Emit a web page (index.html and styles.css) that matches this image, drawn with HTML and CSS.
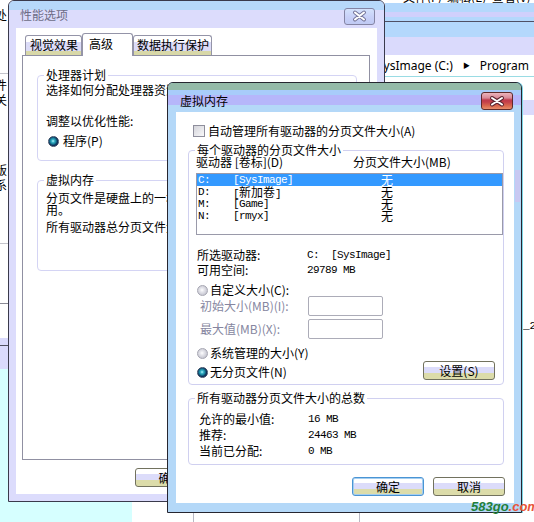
FILE: index.html
```html
<!DOCTYPE html>
<html lang="zh-CN">
<head>
    <meta charset="UTF-8">
    <meta name="viewport" content="width=device-width, initial-scale=1.0">
    <title>虚拟内存</title>
    <link rel="stylesheet" href="styles.css">
</head>
<body>

    <!-- windows left behind on the desktop -->
    <div class="side">
        <div class="frag f-chu">处</div>
        <div class="rule r1"></div>
        <div class="frag f-jian">件</div>
        <div class="frag f-guan">关</div>
        <div class="frag f-ban">版</div>
        <div class="frag f-xi">系</div>
        <div class="rule r2"></div>
        <div class="rule r3"></div>
        <div class="side-band"></div>
        <div class="side-cyan"></div>
    </div>

    <div class="under">
        <div class="under-gap g1"></div>
        <div class="under-line"></div>
        <div class="under-gap g2"></div>
        <div class="under-line"></div>
    </div>

    <div class="explorer">
        <div class="ex-menu"><span>文件(F)&nbsp;&nbsp;编辑(E)&nbsp;&nbsp;查看(V)&nbsp;&nbsp;工具(T)</span></div>
        <div class="ex-title"></div>
        <div class="ex-line"></div>
        <div class="ex-bar"></div>
        <div class="ex-address">
            <span class="crumb first">SysImage (C:)</span>
            <span class="crumb-arrow">&#9654;</span>
            <span class="crumb">Program</span>
        </div>
        <div class="ex-gap"></div>
        <div class="ex-band"></div>
        <div class="ex-rest">_2</div>
    </div>

    <!-- 性能选项 (inactive) -->
    <div class="perf">
        <div class="perf-title">性能选项</div>
        <div class="close inactive">
            <svg width="29" height="15" viewBox="0 0 29 15">
                <path d="M10 3.5 L19 10.5 M19 3.5 L10 10.5" stroke="#76769a" stroke-width="4" stroke-linecap="round"/>
                <path d="M10 3.5 L19 10.5 M19 3.5 L10 10.5" stroke="#fff" stroke-width="2" stroke-linecap="round"/>
            </svg>
        </div>
        <div class="perf-client">
            <div class="tabs">
                <div class="tab t1">视觉效果</div>
                <div class="tab t2 active">高级</div>
                <div class="tab t3">数据执行保护</div>
            </div>
            <div class="tab-panel">
                <div class="pgroup pg1">
                    <span class="legend">处理器计划</span>
                    <div class="line">选择如何分配处理器资源。</div>
                    <div class="line l-adjust">调整以优化性能:</div>
                    <div class="opt perf-opt"><span class="radio on"></span>程序(P)</div>
                </div>
                <div class="pgroup pg2">
                    <span class="legend">虚拟内存</span>
                    <div class="line">分页文件是硬盘上的一块区域，Windows 当作 RAM 使</div>
                    <div class="line">用。</div>
                    <div class="line l-total">所有驱动器总分页文件大小: &nbsp; 0 MB</div>
                </div>
            </div>
            <div class="perf-buttons">
                <div class="btn">确定</div>
                <div class="btn">取消</div>
                <div class="btn">应用(A)</div>
            </div>
        </div>
    </div>

    <!-- 虚拟内存 (active) -->
    <div class="vm">
        <div class="vm-title">虚拟内存</div>
        <div class="close active">
            <svg width="30" height="16" viewBox="0 0 30 16">
                <path d="M10 5 L20 11.5 M20 5 L10 11.5" stroke="#5a2430" stroke-width="4" stroke-linecap="round"/>
                <path d="M10 5 L20 11.5 M20 5 L10 11.5" stroke="#fff" stroke-width="2" stroke-linecap="round"/>
            </svg>
        </div>
        <div class="glass"></div>
        <div class="vm-client">
            <div class="check-row"><span class="checkbox"></span>自动管理所有驱动器的分页文件大小(A)</div>

            <div class="group g-files">
                <span class="legend">每个驱动器的分页文件大小</span>
                <div class="cols">
                    <span class="col-drive">驱动器 [卷标](D)</span>
                    <span>分页文件大小(MB)</span>
                </div>
                <div class="listbox">
                    <div class="item sel mono"><span class="c-letter">C:</span><span class="c-label">[SysImage]</span><span class="c-size cjk">无</span></div>
                    <div class="item mono"><span class="c-letter">D:</span><span class="c-label">[<span class="cjk">新加卷</span>]</span><span class="c-size cjk">无</span></div>
                    <div class="item mono"><span class="c-letter">M:</span><span class="c-label">[Game]</span><span class="c-size cjk">无</span></div>
                    <div class="item mono"><span class="c-letter">N:</span><span class="c-label">[rmyx]</span><span class="c-size cjk">无</span></div>
                </div>
                <div class="info-row"><span class="info-label">所选驱动器:</span><span class="mono">C:  [SysImage]</span></div>
                <div class="info-row tight"><span class="info-label">可用空间:</span><span class="mono">29789 MB</span></div>
                <div class="opt"><span class="radio"></span>自定义大小(C):</div>
                <div class="field"><span class="field-label">初始大小(MB)(I):</span><span class="input"></span></div>
                <div class="field second"><span class="field-label">最大值(MB)(X):</span><span class="input"></span></div>
                <div class="opt spaced"><span class="radio"></span>系统管理的大小(Y)</div>
                <div class="opt-last">
                    <div class="opt-inline"><span class="radio on"></span>无分页文件(N)</div>
                    <div class="btn set-btn">设置(S)</div>
                </div>
            </div>

            <div class="group g-total">
                <span class="legend">所有驱动器分页文件大小的总数</span>
                <div class="tot-row"><span class="tot-label">允许的最小值:</span><span class="mono">16 MB</span></div>
                <div class="tot-row"><span class="tot-label">推荐:</span><span class="mono">24463 MB</span></div>
                <div class="tot-row"><span class="tot-label">当前已分配:</span><span class="mono">0 MB</span></div>
            </div>

            <div class="vm-buttons">
                <div class="btn default">确定</div>
                <div class="btn">取消</div>
            </div>
        </div>
    </div>

    <div class="watermark"><span class="wm-green">583go</span><span class="wm-red">.com</span></div>

</body>
</html>
```

FILE: styles.css
```css
body {
    margin: 0;
    width: 534px;
    height: 522px;
    overflow: hidden;
    position: relative;
    background: #fff;
    font-family: "Noto Sans CJK SC", sans-serif;
    font-size: 12px;
    line-height: 12px;
    color: #000;
}

/* desktop leftovers */
.side {
    position: absolute;
    left: 0;
    top: 0;
    width: 132px;
    height: 522px;
    display: flex;
    flex-direction: column;
    overflow: hidden;
}
.frag {
    height: 12px;
    margin-left: -5px;
    white-space: nowrap;
}
.f-chu { margin-top: 9px; }
.f-jian { margin-top: 5px; }
.f-guan { margin-top: 3px; }
.f-ban { margin-top: 58px; }
.f-xi { margin-top: 3px; }
.rule { height: 1px; background: #c4c4cc; }
.r1 { margin-top: 52px; }
.r2 { margin-top: 52px; }
.r3 { margin-top: 59px; background: #8a8a96; }
.side-band {
    margin-top: 34px;
    height: 31px;
    background: linear-gradient(#dadafc 0 7px, #505060 7px 8px, #dadafc 8px);
}
.side-cyan { flex: 1; background: #d6ffff; }

.under {
    position: absolute;
    left: 132px;
    top: 501px;
    height: 21px;
    display: flex;
}
.under-gap.g1 { width: 61px; }
.under-gap.g2 { width: 165px; }
.under-line { width: 1px; background: #b8b8c4; }

.explorer {
    position: absolute;
    left: 385px;
    top: 0;
    width: 149px;
    height: 522px;
    display: flex;
    flex-direction: column;
    overflow: hidden;
}
.ex-menu { height: 3px; overflow: hidden; white-space: nowrap; }
.ex-menu span { display: block; margin-top: -9px; padding-left: 18px; }
.ex-title {
    height: 18px;
    background: linear-gradient(#b4d8fc 0 9px, #d0d0fc 9px 14px, #b4d8fc 14px);
}
.ex-line { height: 1px; background: #505064; }
.ex-bar {
    height: 33px;
    background: linear-gradient(#b4d8fc 0 15px, #dadafc 15px);
}
.ex-address {
    height: 21px;
    line-height: 21px;
    border-bottom: 1px solid #9adce4;
    white-space: nowrap;
    font-family: "Noto Sans", sans-serif;
    font-size: 12px;
    display: flex;
    gap: 10px;
}
.crumb.first { margin-left: -8px; }
.crumb-arrow { font-size: 7px; }
.ex-gap { height: 23px; }
.ex-band { height: 15px; background: #dadafc; }
.ex-rest {
    padding: 205px 0 0 138px;
    font-family: "Liberation Mono", monospace;
    font-size: 11px;
}

/* 性能选项 */
.perf {
    position: absolute;
    left: 8px;
    top: 0;
    width: 377px;
    height: 502px;
    box-sizing: border-box;
    border: 1px solid #3a3a4c;
    border-radius: 6px 6px 0 0;
    background: #dcdcfc;
    padding: 0 7px 7px 7px;
    overflow: hidden;
}
.perf-title {
    height: 27px;
    box-sizing: border-box;
    margin: 0 -7px;
    padding: 8px 0 0 11px;
    color: #6c6c86;
    background: linear-gradient(#b6d8fa 0 9px, #dcdcfc 9px);
}
.close {
    position: absolute;
    box-sizing: border-box;
    border-radius: 3px;
}
.close svg { display: block; }
.close.inactive {
    left: 335px;
    top: 7px;
    width: 31px;
    height: 17px;
    border: 1px solid #8484a4;
    background: linear-gradient(#d4e2fc, #c8d0f8 55%, #c0caf4);
}
.perf-client {
    height: 466px;
    box-sizing: border-box;
    background: #fff;
    padding-top: 5px;
    overflow: hidden;
}
.tabs {
    display: flex;
    align-items: flex-end;
    height: 22px;
    margin-left: 9px;
}
.tab {
    box-sizing: border-box;
    height: 20px;
    border: 1px solid #9494a8;
    border-bottom: 0;
    border-radius: 3px 3px 0 0;
    line-height: 18px;
    white-space: nowrap;
    background: linear-gradient(#fff 0 6px, #dcdcf8 6px 15px, #d8d8a8 15px);
}
.tab.t1 { width: 57px; padding-left: 4px; }
.tab.t2 { width: 51px; padding-left: 6px; }
.tab.t3 { width: 79px; padding-left: 3px; }
.tab.active {
    height: 23px;
    margin-bottom: -1px;
    line-height: 20px;
    background: #fff;
    position: relative;
    z-index: 1;
}
.tab-panel {
    margin-left: 6px;
    width: 348px;
    height: 405px;
    box-sizing: border-box;
    border: 1px solid #9090a2;
}
.pgroup {
    position: relative;
    box-sizing: border-box;
    width: 320px;
    margin: 19px 0 0 14px;
    border: 1px solid #d4d4f4;
    border-radius: 4px;
    padding: 8px 8px 13px 8px;
}
.pg2 { height: 91px; padding-top: 11px; }
.line { height: 12px; white-space: nowrap; }
.l-adjust { margin-top: 19px; }
.l-total { margin-top: 5px; }
.perf-opt { margin-top: 10px; }
.perf-opt .radio { margin-left: 1px; margin-right: 4px; }
.perf-buttons {
    display: flex;
    justify-content: flex-end;
    gap: 10px;
    margin: 8px 9px 0 0;
}
.perf-buttons .btn { width: 71px; }

.legend {
    position: absolute;
    top: -7px;
    left: 6px;
    padding: 0 2px;
    background: #fff;
    white-space: nowrap;
}

/* 虚拟内存 */
.vm {
    position: absolute;
    left: 167px;
    top: 82px;
    width: 355px;
    height: 431px;
    box-sizing: border-box;
    border: 1px solid #262630;
    border-radius: 6px 6px 0 0;
    background: #b4d8f8;
    padding: 0 7px 9px 8px;
    overflow: hidden;
    box-shadow: 1px 0 0 #7cd6e6;
}
.vm-title {
    height: 29px;
    box-sizing: border-box;
    margin: 0 -7px 0 -8px;
    padding: 12px 0 0 12px;
    background: linear-gradient(#94baa8 0 7px, #a8ccfa 7px 12px, #b6b6fa 12px 22px, #b4d8f8 22px);
}
.close.active {
    left: 313px;
    top: 9px;
    width: 32px;
    height: 18px;
    border: 1px solid #5e2a2a;
    background: linear-gradient(#ecb4bc 0, #d88896 5px, #c03a4a 7px, #c4404a 9px, #da6a4e 13px, #e88c6c 16px);
}
.glass {
    position: absolute;
    left: 347px;
    top: 87px;
    width: 5px;
    height: 32px;
    background: #c8c8f2;
}
.vm-client {
    height: 391px;
    box-sizing: border-box;
    background: #fff;
    padding: 13px 10px 0 12px;
}
.check-row {
    display: flex;
    align-items: center;
    height: 12px;
    margin-left: 5px;
}
.checkbox {
    width: 12px;
    height: 12px;
    box-sizing: border-box;
    margin-right: 3px;
    border: 1px solid #8e8e9c;
    background: linear-gradient(135deg, #d4d4da, #f8f8fa);
}
.group {
    position: relative;
    border: 1px solid #d0d0f0;
    border-radius: 4px;
}
.g-files { margin-top: 13px; padding: 5px 0 4px 7px; }
.cols { display: flex; height: 12px; white-space: nowrap; }
.col-drive { width: 157px; }
.listbox {
    margin-top: 5px;
    height: 62px;
    box-sizing: border-box;
    border: 1px solid #9a9aaa;
}
.mono {
    font-family: "Liberation Mono", monospace;
    font-size: 11px;
    letter-spacing: -0.6px;
    white-space: pre;
}
.cjk {
    font-family: "Noto Sans CJK SC", sans-serif;
    font-size: 12px;
    letter-spacing: 0;
}
.item {
    display: flex;
    height: 12px;
    line-height: 12px;
    padding-left: 1px;
}
.item.sel { background: #3399ff; color: #fff; }
.c-letter { width: 35px; }
.c-label { width: 148px; }
.info-row {
    display: flex;
    height: 12px;
    margin-top: 14px;
    padding-left: 1px;
}
.info-row.tight { margin-top: 3px; }
.info-label { width: 110px; }
.opt {
    display: flex;
    align-items: center;
    height: 12px;
    margin-top: 8px;
    padding-left: 1px;
    white-space: nowrap;
}
.radio {
    flex: none;
    width: 11px;
    height: 11px;
    box-sizing: border-box;
    border-radius: 50%;
    border: 1px solid #a6a6b2;
    background: radial-gradient(circle at 45% 45%, #fff 0, #e6e6ec 2px, #c8c8d2 5px);
    margin-right: 2px;
}
.radio.on {
    border-color: #3a4a64;
    background: radial-gradient(circle at 45% 45%, #b8f4ff 0, #3ab4c8 1.5px, #177c98 3px, #0c2e58 4.5px);
}
.field {
    display: flex;
    align-items: center;
    height: 20px;
    padding-left: 4px;
    color: #8686a0;
    white-space: nowrap;
}
.field.second { margin-top: 3px; }
.field-label { width: 108px; }
.input {
    width: 75px;
    height: 20px;
    box-sizing: border-box;
    border: 1px solid #acacb8;
    border-radius: 2px;
}
.opt.spaced { margin-top: 8px; }
.opt-last {
    display: flex;
    align-items: center;
    justify-content: space-between;
    height: 19px;
    margin: 2px 8px 0 1px;
}
.opt-inline {
    display: flex;
    align-items: center;
    margin-top: 3px;
    white-space: nowrap;
}
.btn {
    box-sizing: border-box;
    width: 72px;
    height: 19px;
    border: 1px solid #72725e;
    border-radius: 3px;
    background: linear-gradient(#fff 0 5px, #dcdcfa 5px 11px, #dcdcaa 11px);
    text-align: center;
    line-height: 17px;
    white-space: nowrap;
}
.btn.default {
    border-color: #4a94d4;
    box-shadow: inset 0 0 0 1px #a4cef0;
}
.g-total { margin-top: 13px; padding: 12px 0 5px 10px; }
.tot-row { display: flex; height: 16px; line-height: 16px; }
.tot-label { width: 109px; }
.vm-buttons {
    display: flex;
    justify-content: flex-end;
    gap: 9px;
    margin: 12px -1px 0 0;
}

.watermark {
    position: absolute;
    left: 471px;
    top: 500px;
    font-family: "Liberation Sans", sans-serif;
    font-size: 13px;
    line-height: 13px;
    font-weight: bold;
    font-style: italic;
}
.wm-green { color: #1f7f3a; }
.wm-red { color: #e8553a; }
```
